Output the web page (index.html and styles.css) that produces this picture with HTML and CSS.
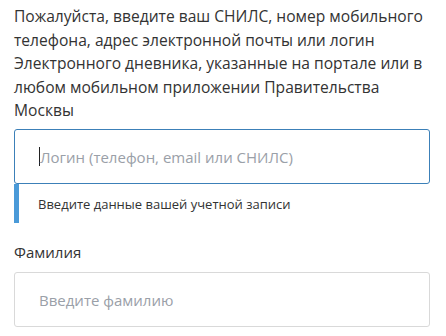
FILE: index.html
```html
<!DOCTYPE html>
<html>
<head>
    <title>Вход</title>
    <link rel="stylesheet" href="styles.css">
</head>
<body>
    <div class="form">
        <p class="intro">Пожалуйста, введите ваш СНИЛС, номер мобильного<br>телефона, адрес электронной почты или логин<br>Электронного дневника, указанные на портале или в<br>любом мобильном приложении Правительства<br>Москвы</p>

        <div class="field">
            <div class="input input-active">
                <span class="caret"></span><span class="placeholder">Логин (телефон, email или СНИЛС)</span>
            </div>
            <div class="hint">Введите данные вашей учетной записи</div>
        </div>

        <div class="field">
            <div class="label">Фамилия</div>
            <div class="input">
                <span class="placeholder">Введите фамилию</span>
            </div>
        </div>
    </div>
</body>
</html>
```

FILE: styles.css
```css
body {
    margin: 0;
    background: #fff;
    font-family: "Open Sans", Arial, sans-serif;
    color: #333;
}
.form {
    padding: 5px 16px 0 14px;
}
.intro {
    margin: 0 0 6.5px;
    font-size: 15.6px;
    line-height: 23.5px;
    white-space: nowrap;
}
.input {
    height: 53px;
    border: 1px solid #d9d9d9;
    border-radius: 3px;
    display: flex;
    align-items: center;
    padding: 0 24px;
    font-size: 15px;
}
.input-active {
    border-color: #3c80b8;
}
.caret {
    width: 1px;
    height: 19px;
    background: #222;
}
.placeholder {
    color: #9aa0a8;
}
.hint {
    border-left: 5px solid #4a9ad8;
    padding: 13px 0 12px 19px;
    font-size: 13px;
    line-height: 14px;
}
.field + .field {
    margin-top: 19px;
}
.label {
    font-size: 15px;
    line-height: 20px;
    margin-bottom: 10px;
}
```
